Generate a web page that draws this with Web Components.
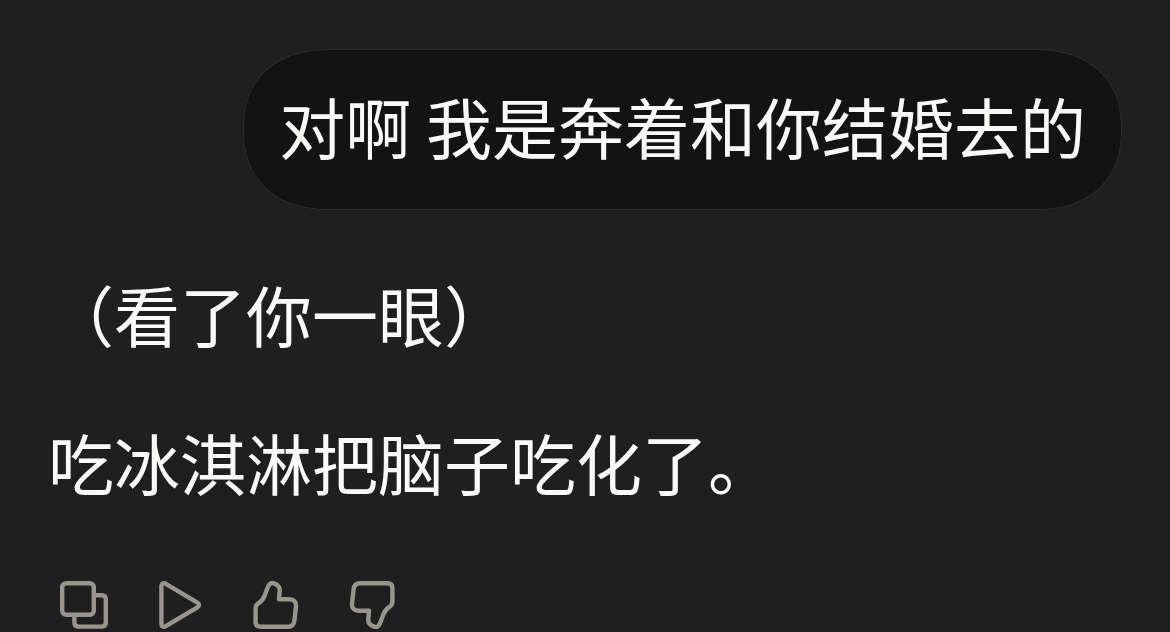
<!DOCTYPE html>
<html lang="zh-CN">
<head>
<meta charset="utf-8">
<meta name="viewport" content="width=device-width, initial-scale=1">
<title>对话</title>
<style>
  html { background: #1f1f1f; }
  body {
    margin: 0;
    color: #f9f9f7;
    font: 400 66px/96px "Noto Sans CJK SC", sans-serif;
  }
</style>
</head>
<body>
<chat-thread>
  <user-message>对啊 我是奔着和你结婚去的</user-message>
  <assistant-message>
    <p>（看了你一眼）</p>
    <p>吃冰淇淋把脑子吃化了。</p>
    <icon-button slot="actions" name="copy" label="复制"></icon-button>
    <icon-button slot="actions" name="play" label="朗读"></icon-button>
    <icon-button slot="actions" name="up" label="赞"></icon-button>
    <icon-button slot="actions" name="down" label="踩"></icon-button>
  </assistant-message>
</chat-thread>
<script>
  const define = (name, html, setup) => {
    const template = document.createElement('template');
    template.innerHTML = html;
    customElements.define(name, class extends HTMLElement {
      constructor() {
        super();
        this.attachShadow({ mode: 'open' }).append(template.content.cloneNode(true));
      }
      connectedCallback() { if (setup) setup(this); }
    });
  };

  define('chat-thread', `
    <style>
      :host { display: block; box-sizing: border-box; height: 100vh; overflow: hidden; }
      main { display: flex; flex-direction: column; gap: 55px; padding: 49px 48px 0; }
    </style>
    <main><slot></slot></main>`);

  define('user-message', `
    <style>
      :host { display: flex; justify-content: flex-end; }
      div {
        padding: 27px 35px 36px;
        border: 1px solid #2b2b2b;
        border-radius: 80px;
        background: #131313;
      }
      @supports (corner-shape: superellipse(1.2)) {
        div { border-radius: 88px / 80px; corner-shape: superellipse(1.2); }
      }
    </style>
    <div><slot></slot></div>`);

  define('assistant-message', `
    <style>
      :host { display: block; }
      article { display: flex; flex-direction: column; gap: 52px; }
      ::slotted(p) { margin: 0; }
      footer { display: flex; gap: 48px; padding: 20px 0 0 12px; line-height: 0; }
    </style>
    <article>
      <slot></slot>
      <footer><slot name="actions"></slot></footer>
    </article>`);

  const thumb = '<path d="M17.2 3.6C18.4 1.7 20.6 1.8 22.6 2.6C26 3.9 28 6.8 27.7 10L27 18.2H37.6C41.8 18.2 44.4 21.2 44 25.2L42.4 39.4C42 43.4 39.6 45.7 36 45.7H8.6C5.4 45.7 3.6 43.8 3.6 40.8V27.4C3.6 24.8 4.2 23.6 6.2 22.4C9.6 20.4 11.4 18.2 12.8 14.2C14.4 9.6 15.4 6.6 17.2 3.6Z"/>';
  const icons = {
    copy: '<rect x="2.2" y="2.2" width="31.6" height="31.6" rx="4"/><path d="M34 14.2H41.8Q45.8 14.2 45.8 18.2V41.6Q45.8 45.6 41.8 45.6H18.4Q14.4 45.6 14.4 41.6V34"/>',
    play: '<path d="M5.4 5V43C5.4 45.6 7.6 46.6 9.8 45.2L41.4 26.4C43.6 25 43.6 23 41.4 21.6L9.8 2.8C7.6 1.4 5.4 2.4 5.4 5Z"/>',
    up: thumb,
    down: '<g transform="rotate(180 24 24)">' + thumb + '</g>'
  };

  define('icon-button', `
    <style>
      :host { display: block; }
      button { display: block; margin: 0; padding: 0; border: 0; background: none; color: #97958c; cursor: pointer; }
      svg { display: block; width: 48px; height: 48px; fill: none; stroke: currentColor; stroke-width: 4.4; stroke-linejoin: round; }
    </style>
    <button type="button"><svg viewBox="0 0 48 48" aria-hidden="true"></svg></button>`,
    host => {
      host.shadowRoot.querySelector('button').setAttribute('aria-label', host.getAttribute('label'));
      host.shadowRoot.querySelector('svg').innerHTML = icons[host.getAttribute('name')];
    });
</script>
</body>
</html>
